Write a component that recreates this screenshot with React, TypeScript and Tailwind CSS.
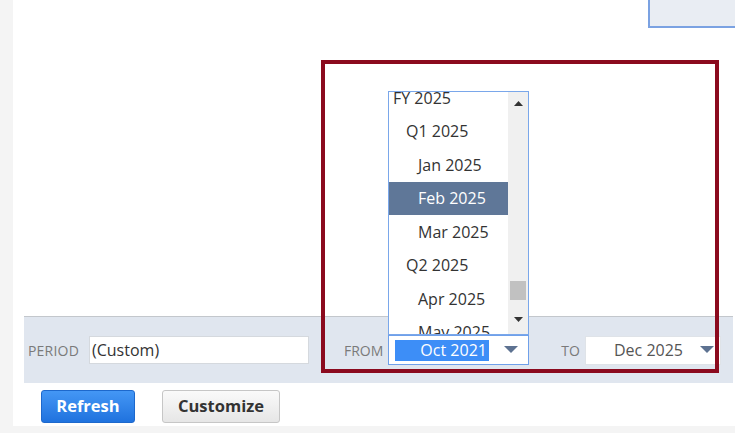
import React from "react";

const periods = [
  { label: "FY 2025", indent: "pl-[4px]" },
  { label: "Q1 2025", indent: "pl-[17px]" },
  { label: "Jan 2025", indent: "pl-[29px]" },
  { label: "Feb 2025", indent: "pl-[29px]", active: true },
  { label: "Mar 2025", indent: "pl-[29px]" },
  { label: "Q2 2025", indent: "pl-[17px]" },
  { label: "Apr 2025", indent: "pl-[29px]" },
  { label: "May 2025", indent: "pl-[29px]" },
];

function Caret() {
  return (
    <svg width="14" height="8" viewBox="0 0 14 8">
      <path d="M0 0 H14 L7 7 Z" fill="#5d7291" />
    </svg>
  );
}

export default function App() {
  return (
    <div className="relative w-[735px] h-[433px] overflow-hidden bg-[#f4f4f4] font-['Open_Sans',sans-serif] text-[#333]">
      <div className="ml-[13px] w-[722px] h-[426px] bg-white flex flex-col">
        {/* top bar */}
        <div className="flex justify-end">
          <div className="w-[87px] h-[28px] bg-[#e9edf3] border-l-2 border-b-2 border-[#7ba2e2]" />
        </div>

        <div className="flex-1" />

        {/* filter band */}
        <div className="ml-[11px] w-[709px] h-[67px] bg-[#e0e6ef] border-t border-[#c3c7cc] flex items-center text-[16px]">
          <span className="ml-[4px] text-[14px] text-[#7a7a7a] tracking-[0.2px]">PERIOD</span>
          <div className="ml-[10px] w-[220px] h-[28px] bg-white border border-[#d5d9de] flex items-center pl-[2px]">
            (Custom)
          </div>
          <span className="ml-[35px] text-[14px] text-[#7a7a7a]">FROM</span>
          <div className="ml-[5px] w-[141px] h-[30px] bg-white border border-[#6fa0ea] flex items-center pl-[6px] pr-[10px]">
            <span className="h-[21px] flex items-center bg-[#3d8ef7] text-white pl-[25px] pr-[2px] leading-none">
              Oct 2021
            </span>
            <span className="ml-auto flex"><Caret /></span>
          </div>
          <span className="ml-[32px] text-[14px] text-[#7a7a7a]">TO</span>
          <div className="ml-[5px] w-[136px] h-[29px] bg-white border border-[#dfe3e8] flex items-center pl-[28px] pr-[6px]">
            <span className="text-[#555]">Dec 2025</span>
            <span className="ml-auto flex"><Caret /></span>
          </div>
        </div>

        {/* buttons */}
        <div className="flex items-center gap-[27px] pl-[28px] pt-[7px] pb-[3px]">
          <button className="w-[94px] h-[33px] rounded-[3px] bg-gradient-to-b from-[#4497f5] to-[#1f72de] border border-[#1d68cc] text-white font-bold text-[16.5px]">
            Refresh
          </button>
          <button className="w-[118px] h-[33px] rounded-[3px] bg-gradient-to-b from-[#fafafa] to-[#e6e6e6] border border-[#c6c6c6] text-[#333] font-bold text-[16.5px]">
            Customize
          </button>
        </div>
      </div>

      {/* open period list */}
      <div className="absolute left-[388px] top-[91px] w-[141px] h-[244px] bg-white border border-[#7aa7ea] flex overflow-hidden text-[16px]">
        <div className="flex-1 overflow-hidden">
          <div className="-mt-[11px]">
            {periods.map((p) => (
              <div
                key={p.label}
                className={`h-[33.5px] flex items-center ${p.indent} ${p.active ? "bg-[#5f7798] text-white" : "text-[#333]"}`}
              >
                {p.label}
              </div>
            ))}
          </div>
        </div>
        <div className="w-[20px] bg-[#f0f0f0] flex flex-col items-center">
          <svg className="mt-[9px]" width="9" height="5" viewBox="0 0 9 5">
            <path d="M0 5 L4.5 0 L9 5 Z" fill="#333" />
          </svg>
          <div className="flex-1" />
          <div className="w-[16px] h-[19px] bg-[#c1c1c1]" />
          <div className="h-[17px]" />
          <svg className="mb-[12px]" width="9" height="5" viewBox="0 0 9 5">
            <path d="M0 0 L9 0 L4.5 5 Z" fill="#333" />
          </svg>
        </div>
      </div>

      {/* highlight frame */}
      <div className="absolute left-[321px] top-[60px] w-[398px] h-[313px] border-4 border-[#8b0a1e] pointer-events-none" />
    </div>
  );
}
